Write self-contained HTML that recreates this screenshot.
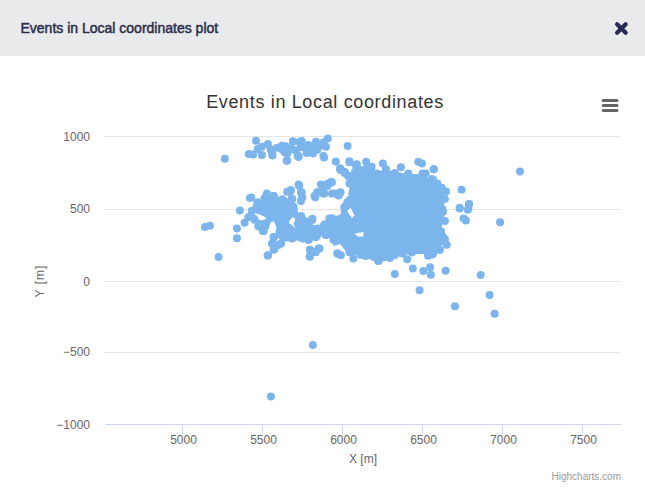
<!DOCTYPE html>
<html><head><meta charset="utf-8">
<style>
html,body{margin:0;padding:0;width:645px;height:491px;overflow:hidden;background:#fff;}
body{position:relative;font-family:"Liberation Sans",sans-serif;}
#hdr{position:absolute;left:0;top:0;width:645px;height:56px;background:#e9eaec;}
svg{position:absolute;left:0;top:0;}
</style></head><body>
<div id="hdr"></div>
<svg width="645" height="491" viewBox="0 0 645 491" font-family="Liberation Sans, sans-serif">
<text x="20.5" y="33" font-size="14" fill="#2c2f4e" stroke="#2c2f4e" stroke-width="0.5">Events in Local coordinates plot</text>
<path d="M617.1 24.2 L625.7 32.8 M625.7 24.2 L617.1 32.8" stroke="#282b58" stroke-width="4.2" stroke-linecap="round"/>
<text x="325" y="107.5" text-anchor="middle" font-size="18" fill="#333333" letter-spacing="0.65">Events in Local coordinates</text>
<path d="M603.2 100.5 H617 M603.2 105.5 H617 M603.2 110.5 H617" stroke="#666666" stroke-width="3" stroke-linecap="round"/>
<g stroke="#e6e6e6" stroke-width="1">
<path d="M105 136.5 H621 M105 209.5 H621 M105 281.5 H621 M105 352.5 H621"/>
</g>
<path d="M105 424.5 H621" stroke="#ccd6eb" stroke-width="1"/>
<path d="M182.5 424 V434 M262.5 424 V434 M342.5 424 V434 M422.5 424 V434 M502.5 424 V434 M582.5 424 V434" stroke="#ccd6eb" stroke-width="1"/>
<g font-size="12" fill="#666666" text-anchor="end">
<text x="90" y="141">1000</text>
<text x="90" y="213">500</text>
<text x="90" y="285.5">0</text>
<text x="90" y="356">−500</text>
<text x="90" y="428.5">−1000</text>
</g>
<g font-size="12" fill="#666666" text-anchor="middle">
<text x="183.5" y="443.5">5000</text>
<text x="263.5" y="443.5">5500</text>
<text x="343.5" y="443.5">6000</text>
<text x="423.5" y="443.5">6500</text>
<text x="503.5" y="443.5">7000</text>
<text x="583.5" y="443.5">7500</text>
</g>
<text x="363" y="463" font-size="12" fill="#666666" text-anchor="middle">X [m]</text>
<text transform="translate(44 281) rotate(-90)" font-size="12" fill="#666666" text-anchor="middle" letter-spacing="1">Y [m]</text>
<text x="621" y="479.5" font-size="10" fill="#999999" text-anchor="end">Highcharts.com</text>
<g fill="#7cb5ec">
<path d="M350.8 181.8 L359.3 173.2 L371.6 170.8 L391.1 170.8 L403.3 173.2 L422.9 174.4 L432.7 181.8 L442.5 189.1 L443.7 198.9 L444.9 213.6 L442.5 223.3 L441.2 235.6 L437.6 247.8 L427.8 253.9 L410.7 253.9 L391.1 256.4 L378.9 257.6 L366.7 252.7 L364.2 242.9 L366.7 230.7 L356.9 218.5 L349.6 208.7 L348.3 194.0 Z"/>
<path d="M256 203 L265 196 L285 197 L297 204 L298 213 L300 216 L312 225 L328 226 L334 232 L316 238 L300 240 L282 242 L277 236 L276 222 L268 219 L258 213 Z"/>
<path d="M327 220 L341 214 L343 205 L375 205 L375 255 L347 255 L345 250 L340 244 L334 246 L331 242 L329 236 L326 231 L325 222 Z"/>
<circle cx="256.0" cy="140.7" r="4"/>
<circle cx="248.8" cy="154.0" r="4"/>
<circle cx="253.0" cy="154.4" r="4"/>
<circle cx="261.9" cy="155.1" r="4"/>
<circle cx="257.7" cy="149.1" r="4"/>
<circle cx="261.9" cy="146.7" r="4"/>
<circle cx="267.9" cy="144.0" r="4"/>
<circle cx="270.7" cy="149.5" r="4"/>
<circle cx="272.1" cy="153.7" r="4"/>
<circle cx="277.2" cy="147.7" r="4"/>
<circle cx="281.9" cy="145.8" r="4"/>
<circle cx="285.6" cy="146.3" r="4"/>
<circle cx="284.7" cy="152.3" r="4"/>
<circle cx="287.0" cy="160.7" r="4"/>
<circle cx="293.0" cy="141.2" r="4"/>
<circle cx="290.2" cy="148.6" r="4"/>
<circle cx="295.8" cy="150.5" r="4"/>
<circle cx="297.7" cy="156.0" r="4"/>
<circle cx="299.5" cy="142.1" r="4"/>
<circle cx="224.8" cy="158.7" r="4"/>
<circle cx="293.0" cy="141.7" r="4"/>
<circle cx="301.7" cy="141.1" r="4"/>
<circle cx="285.0" cy="147.3" r="4"/>
<circle cx="282.5" cy="149.8" r="4"/>
<circle cx="287.4" cy="153.5" r="4"/>
<circle cx="286.8" cy="160.4" r="4"/>
<circle cx="292.4" cy="149.2" r="4"/>
<circle cx="298.6" cy="156.0" r="4"/>
<circle cx="300.5" cy="147.3" r="4"/>
<circle cx="308.5" cy="144.9" r="4"/>
<circle cx="306.7" cy="152.9" r="4"/>
<circle cx="312.9" cy="153.5" r="4"/>
<circle cx="316.0" cy="141.7" r="4"/>
<circle cx="323.4" cy="142.4" r="4"/>
<circle cx="327.8" cy="138.6" r="4"/>
<circle cx="325.9" cy="146.7" r="4"/>
<circle cx="323.4" cy="156.0" r="4"/>
<circle cx="347.6" cy="146.1" r="4"/>
<circle cx="335.8" cy="161.6" r="4"/>
<circle cx="340.2" cy="168.4" r="4"/>
<circle cx="345.1" cy="172.8" r="4"/>
<circle cx="349.5" cy="162.2" r="4"/>
<circle cx="355.7" cy="164.7" r="4"/>
<circle cx="350.7" cy="177.1" r="4"/>
<circle cx="356.9" cy="174.6" r="4"/>
<circle cx="298.6" cy="184.6" r="4"/>
<circle cx="320.9" cy="184.6" r="4"/>
<circle cx="331.5" cy="182.1" r="4"/>
<circle cx="327.1" cy="183.9" r="4"/>
<circle cx="356.9" cy="164.2" r="4"/>
<circle cx="366.2" cy="161.7" r="4"/>
<circle cx="371.7" cy="166.7" r="4"/>
<circle cx="382.9" cy="163.6" r="4"/>
<circle cx="386.0" cy="169.2" r="4"/>
<circle cx="394.7" cy="172.9" r="4"/>
<circle cx="400.9" cy="167.3" r="4"/>
<circle cx="408.3" cy="173.5" r="4"/>
<circle cx="418.3" cy="161.7" r="4"/>
<circle cx="422.0" cy="163.6" r="4"/>
<circle cx="422.6" cy="173.5" r="4"/>
<circle cx="433.8" cy="169.2" r="4"/>
<circle cx="431.9" cy="179.1" r="4"/>
<circle cx="355.0" cy="171.7" r="4"/>
<circle cx="360.0" cy="172.3" r="4"/>
<circle cx="376.7" cy="173.5" r="4"/>
<circle cx="433.7" cy="169.2" r="4"/>
<circle cx="425.6" cy="173.6" r="4"/>
<circle cx="433.1" cy="179.8" r="4"/>
<circle cx="437.4" cy="183.5" r="4"/>
<circle cx="441.7" cy="187.8" r="4"/>
<circle cx="446.1" cy="191.6" r="4"/>
<circle cx="444.9" cy="199.0" r="4"/>
<circle cx="438.6" cy="204.6" r="4"/>
<circle cx="442.4" cy="208.9" r="4"/>
<circle cx="461.6" cy="189.7" r="4"/>
<circle cx="469.0" cy="204.0" r="4"/>
<circle cx="459.7" cy="207.7" r="4"/>
<circle cx="468.4" cy="208.9" r="4"/>
<circle cx="443.0" cy="211.8" r="4"/>
<circle cx="444.9" cy="221.1" r="4"/>
<circle cx="441.1" cy="231.6" r="4"/>
<circle cx="444.9" cy="239.1" r="4"/>
<circle cx="446.7" cy="244.7" r="4"/>
<circle cx="439.9" cy="249.6" r="4"/>
<circle cx="432.4" cy="254.6" r="4"/>
<circle cx="428.1" cy="255.8" r="4"/>
<circle cx="459.7" cy="208.4" r="4"/>
<circle cx="469.0" cy="204.3" r="4"/>
<circle cx="467.8" cy="209.7" r="4"/>
<circle cx="463.5" cy="218.6" r="4"/>
<circle cx="465.9" cy="220.5" r="4"/>
<circle cx="500.1" cy="222.3" r="4"/>
<circle cx="365.0" cy="254.9" r="4"/>
<circle cx="372.4" cy="256.1" r="4"/>
<circle cx="378.6" cy="261.1" r="4"/>
<circle cx="383.6" cy="257.3" r="4"/>
<circle cx="389.8" cy="258.0" r="4"/>
<circle cx="394.8" cy="254.9" r="4"/>
<circle cx="402.2" cy="253.6" r="4"/>
<circle cx="407.2" cy="259.2" r="4"/>
<circle cx="412.1" cy="252.4" r="4"/>
<circle cx="420.8" cy="249.9" r="4"/>
<circle cx="428.3" cy="254.9" r="4"/>
<circle cx="433.2" cy="253.6" r="4"/>
<circle cx="439.4" cy="249.9" r="4"/>
<circle cx="412.8" cy="268.5" r="4"/>
<circle cx="394.8" cy="274.1" r="4"/>
<circle cx="423.3" cy="271.0" r="4"/>
<circle cx="430.1" cy="267.3" r="4"/>
<circle cx="430.8" cy="274.7" r="4"/>
<circle cx="419.6" cy="290.2" r="4"/>
<circle cx="340.5" cy="170.0" r="4"/>
<circle cx="344.8" cy="173.1" r="4"/>
<circle cx="349.8" cy="176.2" r="4"/>
<circle cx="351.0" cy="183.6" r="4"/>
<circle cx="331.8" cy="182.4" r="4"/>
<circle cx="322.5" cy="186.7" r="4"/>
<circle cx="327.4" cy="186.1" r="4"/>
<circle cx="322.5" cy="193.0" r="4"/>
<circle cx="334.9" cy="193.6" r="4"/>
<circle cx="340.5" cy="192.3" r="4"/>
<circle cx="338.6" cy="195.4" r="4"/>
<circle cx="349.8" cy="199.8" r="4"/>
<circle cx="344.8" cy="207.2" r="4"/>
<circle cx="347.3" cy="202.3" r="4"/>
<circle cx="344.8" cy="214.7" r="4"/>
<circle cx="332.4" cy="218.4" r="4"/>
<circle cx="325.0" cy="224.6" r="4"/>
<circle cx="353.5" cy="217.1" r="4"/>
<circle cx="354.7" cy="187.4" r="4"/>
<circle cx="357.2" cy="177.4" r="4"/>
<circle cx="344.7" cy="210.0" r="4"/>
<circle cx="301.2" cy="216.2" r="4"/>
<circle cx="303.7" cy="221.2" r="4"/>
<circle cx="312.4" cy="218.7" r="4"/>
<circle cx="307.4" cy="226.1" r="4"/>
<circle cx="302.5" cy="238.5" r="4"/>
<circle cx="308.7" cy="239.8" r="4"/>
<circle cx="313.6" cy="233.6" r="4"/>
<circle cx="318.6" cy="229.9" r="4"/>
<circle cx="324.8" cy="224.9" r="4"/>
<circle cx="326.1" cy="234.8" r="4"/>
<circle cx="331.0" cy="218.7" r="4"/>
<circle cx="333.5" cy="239.8" r="4"/>
<circle cx="339.7" cy="227.4" r="4"/>
<circle cx="344.7" cy="216.2" r="4"/>
<circle cx="349.6" cy="218.7" r="4"/>
<circle cx="349.6" cy="239.8" r="4"/>
<circle cx="357.1" cy="219.9" r="4"/>
<circle cx="358.3" cy="241.0" r="4"/>
<circle cx="309.9" cy="249.7" r="4"/>
<circle cx="318.6" cy="248.5" r="4"/>
<circle cx="313.6" cy="252.2" r="4"/>
<circle cx="309.9" cy="256.5" r="4"/>
<circle cx="337.2" cy="253.4" r="4"/>
<circle cx="340.9" cy="255.3" r="4"/>
<circle cx="349.6" cy="252.2" r="4"/>
<circle cx="353.3" cy="258.4" r="4"/>
<circle cx="360.8" cy="254.7" r="4"/>
<circle cx="365.8" cy="255.9" r="4"/>
<circle cx="352.1" cy="246.0" r="4"/>
<circle cx="359.6" cy="247.2" r="4"/>
<circle cx="374.4" cy="257.1" r="4"/>
<circle cx="378.2" cy="260.9" r="4"/>
<circle cx="299.0" cy="185.6" r="4"/>
<circle cx="290.9" cy="189.9" r="4"/>
<circle cx="287.2" cy="191.8" r="4"/>
<circle cx="300.9" cy="192.4" r="4"/>
<circle cx="302.1" cy="197.4" r="4"/>
<circle cx="300.9" cy="201.1" r="4"/>
<circle cx="291.6" cy="198.6" r="4"/>
<circle cx="251.2" cy="197.4" r="4"/>
<circle cx="257.4" cy="202.3" r="4"/>
<circle cx="266.1" cy="196.1" r="4"/>
<circle cx="273.6" cy="196.1" r="4"/>
<circle cx="282.3" cy="199.2" r="4"/>
<circle cx="287.2" cy="204.8" r="4"/>
<circle cx="293.4" cy="208.5" r="4"/>
<circle cx="274.8" cy="204.8" r="4"/>
<circle cx="262.4" cy="207.3" r="4"/>
<circle cx="271.1" cy="216.0" r="4"/>
<circle cx="278.5" cy="217.2" r="4"/>
<circle cx="251.9" cy="211.0" r="4"/>
<circle cx="253.7" cy="218.5" r="4"/>
<circle cx="258.7" cy="223.4" r="4"/>
<circle cx="264.9" cy="223.4" r="4"/>
<circle cx="263.6" cy="230.9" r="4"/>
<circle cx="278.5" cy="220.9" r="4"/>
<circle cx="286.0" cy="219.7" r="4"/>
<circle cx="278.5" cy="228.4" r="4"/>
<circle cx="274.8" cy="235.8" r="4"/>
<circle cx="281.0" cy="234.6" r="4"/>
<circle cx="287.2" cy="229.6" r="4"/>
<circle cx="290.9" cy="234.6" r="4"/>
<circle cx="297.1" cy="222.2" r="4"/>
<circle cx="300.9" cy="216.0" r="4"/>
<circle cx="304.6" cy="220.9" r="4"/>
<circle cx="302.1" cy="229.6" r="4"/>
<circle cx="299.6" cy="237.1" r="4"/>
<circle cx="312.0" cy="219.7" r="4"/>
<circle cx="309.6" cy="227.1" r="4"/>
<circle cx="318.2" cy="228.4" r="4"/>
<circle cx="324.4" cy="224.7" r="4"/>
<circle cx="329.4" cy="218.5" r="4"/>
<circle cx="326.9" cy="234.6" r="4"/>
<circle cx="314.5" cy="196.1" r="4"/>
<circle cx="318.2" cy="192.4" r="4"/>
<circle cx="322.0" cy="185.6" r="4"/>
<circle cx="324.4" cy="193.6" r="4"/>
<circle cx="328.2" cy="183.7" r="4"/>
<circle cx="317.0" cy="235.8" r="4"/>
<circle cx="307.1" cy="235.8" r="4"/>
<circle cx="249.9" cy="198.0" r="4"/>
<circle cx="239.9" cy="210.4" r="4"/>
<circle cx="252.0" cy="211.0" r="4"/>
<circle cx="248.3" cy="217.2" r="4"/>
<circle cx="244.6" cy="222.8" r="4"/>
<circle cx="254.5" cy="219.7" r="4"/>
<circle cx="258.2" cy="203.6" r="4"/>
<circle cx="264.4" cy="198.6" r="4"/>
<circle cx="266.9" cy="193.6" r="4"/>
<circle cx="263.2" cy="208.5" r="4"/>
<circle cx="259.5" cy="224.7" r="4"/>
<circle cx="263.2" cy="230.9" r="4"/>
<circle cx="265.7" cy="225.9" r="4"/>
<circle cx="269.4" cy="220.9" r="4"/>
<circle cx="204.9" cy="227.1" r="4"/>
<circle cx="209.9" cy="225.7" r="4"/>
<circle cx="236.9" cy="228.4" r="4"/>
<circle cx="236.9" cy="238.3" r="4"/>
<circle cx="218.6" cy="257.0" r="4"/>
<circle cx="262.7" cy="230.6" r="4"/>
<circle cx="258.3" cy="226.2" r="4"/>
<circle cx="267.6" cy="255.4" r="4"/>
<circle cx="273.8" cy="237.4" r="4"/>
<circle cx="272.0" cy="243.6" r="4"/>
<circle cx="274.4" cy="249.2" r="4"/>
<circle cx="278.2" cy="244.9" r="4"/>
<circle cx="278.2" cy="232.4" r="4"/>
<circle cx="263.1" cy="231.1" r="4"/>
<circle cx="265.0" cy="224.9" r="4"/>
<circle cx="273.6" cy="237.3" r="4"/>
<circle cx="272.4" cy="243.5" r="4"/>
<circle cx="273.6" cy="249.7" r="4"/>
<circle cx="281.1" cy="243.5" r="4"/>
<circle cx="268.1" cy="255.3" r="4"/>
<circle cx="279.9" cy="229.9" r="4"/>
<circle cx="278.6" cy="222.4" r="4"/>
<circle cx="288.5" cy="220.0" r="4"/>
<circle cx="287.3" cy="231.1" r="4"/>
<circle cx="292.3" cy="238.6" r="4"/>
<circle cx="297.2" cy="223.7" r="4"/>
<circle cx="300.9" cy="236.1" r="4"/>
<circle cx="302.2" cy="220.0" r="4"/>
<circle cx="308.4" cy="239.8" r="4"/>
<circle cx="312.1" cy="220.0" r="4"/>
<circle cx="309.6" cy="229.9" r="4"/>
<circle cx="315.8" cy="237.3" r="4"/>
<circle cx="324.5" cy="224.9" r="4"/>
<circle cx="325.8" cy="234.9" r="4"/>
<circle cx="332.0" cy="218.7" r="4"/>
<circle cx="334.4" cy="239.8" r="4"/>
<circle cx="336.9" cy="228.6" r="4"/>
<circle cx="310.2" cy="249.7" r="4"/>
<circle cx="319.6" cy="248.5" r="4"/>
<circle cx="315.8" cy="252.2" r="4"/>
<circle cx="309.6" cy="256.6" r="4"/>
<circle cx="337.5" cy="253.5" r="4"/>
<circle cx="480.7" cy="275.0" r="4"/>
<circle cx="489.6" cy="295.0" r="4"/>
<circle cx="454.9" cy="306.2" r="4"/>
<circle cx="494.6" cy="313.8" r="4"/>
<circle cx="312.9" cy="345.0" r="4"/>
<circle cx="270.9" cy="396.5" r="4"/>
<circle cx="520.0" cy="171.5" r="4"/>
<circle cx="340.1" cy="168.6" r="4"/>
<circle cx="344.4" cy="171.7" r="4"/>
<circle cx="348.2" cy="176.1" r="4"/>
<circle cx="349.4" cy="161.2" r="4"/>
<circle cx="286.7" cy="160.6" r="4"/>
<circle cx="298.5" cy="156.9" r="4"/>
<circle cx="324.0" cy="157.5" r="4"/>
<circle cx="272.5" cy="155.6" r="4"/>
<circle cx="299.2" cy="185.4" r="4"/>
<circle cx="290.5" cy="191.0" r="4"/>
<circle cx="301.6" cy="192.2" r="4"/>
<circle cx="302.3" cy="197.2" r="4"/>
<circle cx="292.3" cy="199.0" r="4"/>
<circle cx="282.4" cy="199.7" r="4"/>
<circle cx="273.7" cy="195.9" r="4"/>
<circle cx="315.3" cy="197.2" r="4"/>
<circle cx="317.1" cy="192.2" r="4"/>
<circle cx="322.1" cy="185.4" r="4"/>
<circle cx="323.3" cy="193.5" r="4"/>
<circle cx="330.8" cy="182.3" r="4"/>
<circle cx="332.0" cy="193.5" r="4"/>
<circle cx="339.5" cy="193.5" r="4"/>
<circle cx="349.4" cy="183.5" r="4"/>
<circle cx="344.4" cy="207.1" r="4"/>
<circle cx="349.4" cy="200.9" r="4"/>
<circle cx="304.2" cy="146.7" r="4"/>
<circle cx="311.0" cy="146.7" r="4"/>
<circle cx="319.7" cy="146.1" r="4"/>
<circle cx="317.2" cy="149.8" r="4"/>
<circle cx="441.1" cy="240.9" r="4"/>
<circle cx="437.4" cy="245.9" r="4"/>
<circle cx="442.4" cy="236.0" r="4"/>
<circle cx="256.5" cy="207.0" r="4"/>
<circle cx="259.5" cy="210.5" r="4"/>
<circle cx="264.0" cy="212.0" r="4"/>
<circle cx="445.6" cy="270.8" r="4"/>
<circle cx="366.0" cy="169.0" r="4"/>
<circle cx="370.7" cy="170.5" r="4"/>
<circle cx="360.5" cy="170.0" r="4"/>
</g>
<g fill="#fff">
<path d="M346.9 211.1 L350.5 208.1 L354.5 215.2 L352 218.2 Z"/>
<path d="M354.5 233.5 L363.7 232 L363.2 236.6 L357.6 236.6 Z"/>
<path d="M289 221 L293 217 L295.5 219 L293.5 224 L295.5 228.5 L292 225 L289.5 223.5 Z"/>
<path d="M270.7 222.1 L273.5 221.7 L276.4 227.1 L275.5 233 L268 233 L269.3 227.1 Z"/>
</g>
</svg>
</body></html>
